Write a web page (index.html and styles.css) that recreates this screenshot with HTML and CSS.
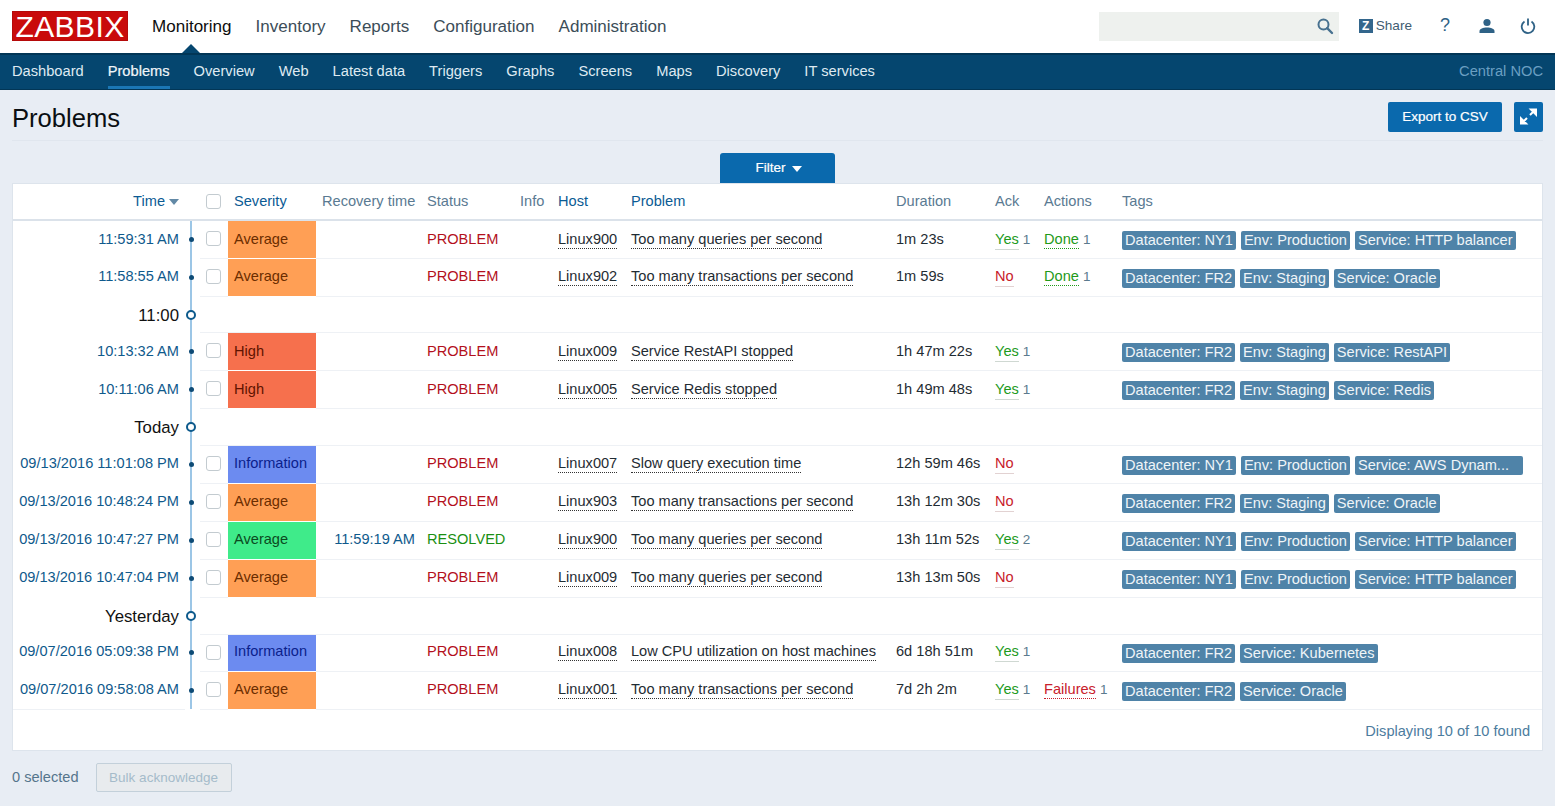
FILE: index.html
```html
<!DOCTYPE html>
<html lang="en">
<head>
<meta charset="utf-8">
<title>Problems</title>
<link rel="stylesheet" href="styles.css">
</head>
<body>
<header class="topbar">
  <div class="logo">ZABBIX</div>
  <nav class="mainnav">
    <a class="active">Monitoring</a><a>Inventory</a><a>Reports</a><a>Configuration</a><a>Administration</a>
  </nav>
  <div class="tools">
    <div class="search"><svg class="ico" width="18" height="18" viewBox="0 0 18 18"><circle cx="7.5" cy="7.5" r="5" fill="none" stroke="#47718f" stroke-width="2"/><path d="M11.2 11.2L16 16" stroke="#47718f" stroke-width="2.4" stroke-linecap="round"/></svg></div>
    <a class="share"><span class="zbox">Z</span>Share</a>
    <a class="help">?</a>
    <svg class="user" width="16" height="16" viewBox="0 0 16 16"><circle cx="8" cy="4.5" r="3.6" fill="#2f6286"/><path d="M0.5 15v-2c0-2.4 3.6-3.6 7.5-3.6s7.5 1.200 7.500 3.600v2z" fill="#2f6286"/></svg>
    <svg class="power" width="16" height="16" viewBox="0 0 16 16"><path d="M4.500 3.500A6.300 6.300 0 1 0 11.500 3.500" fill="none" stroke="#2f6286" stroke-width="1.800"/><path d="M8 0.500V7.500" stroke="#2f6286" stroke-width="1.800"/></svg>
  </div>
</header>
<nav class="subnav">
  <a>Dashboard</a><a class="active">Problems</a><a>Overview</a><a>Web</a><a>Latest data</a><a>Triggers</a><a>Graphs</a><a>Screens</a><a>Maps</a><a>Discovery</a><a>IT services</a>
  <span class="noc">Central NOC</span>
</nav>
<main class="page">
  <div class="titlebar">
    <h1>Problems</h1>
    <div class="actions">
      <button class="btn export">Export to CSV</button>
      <button class="btn expand"><svg width="19" height="19" viewBox="0 0 19 19"><path d="M11 8L16 3M12 2.500h5v5z" stroke="#fff" stroke-width="2" fill="#fff"/><path d="M8 11L3 16M7 16.500H2v-5z" stroke="#fff" stroke-width="2" fill="#fff"/></svg></button>
    </div>
  </div>
  <div class="filterwrap"><button class="filter">Filter<i class="caret-w"></i></button></div>
  <section class="card">
    <table class="grid">
      <colgroup><col class="c-time"><col class="c-line"><col class="c-chk"><col class="c-sev"><col class="c-rec"><col class="c-status"><col class="c-info"><col class="c-host"><col class="c-prob"><col class="c-dur"><col class="c-ack"><col class="c-act"><col class="c-tags"></colgroup>
      <thead>
        <tr>
          <th class="time"><a class="lnk">Time</a><i class="caret-b"></i></th><th></th><th class="chk"><input type="checkbox"></th><th><a class="lnk">Severity</a></th><th class="rec">Recovery time</th><th>Status</th><th>Info</th><th><a class="lnk">Host</a></th><th><a class="lnk">Problem</a></th><th>Duration</th><th>Ack</th><th>Actions</th><th>Tags</th>
        </tr>
      </thead>
      <tbody>
        <tr class="lo"><td class="time"><a>11:59:31 AM</a></td><td class="line"><i class="dot"></i></td><td class="chk"><input type="checkbox"></td><td class="sev avg">Average</td><td></td><td class="prob">PROBLEM</td><td></td><td><span class="u">Linux900</span></td><td><span class="u">Too many queries per second</span></td><td>1m 23s</td><td><span class="yes">Yes</span><span class="n">1</span></td><td><span class="done">Done</span><span class="n">1</span></td><td><div class="tags"><b>Datacenter: NY1</b><b>Env: Production</b><b>Service: HTTP balancer</b></div></td></tr>
        <tr><td class="time"><a>11:58:55 AM</a></td><td class="line"><i class="dot"></i></td><td class="chk"><input type="checkbox"></td><td class="sev avg">Average</td><td></td><td class="prob">PROBLEM</td><td></td><td><span class="u">Linux902</span></td><td><span class="u">Too many transactions per second</span></td><td>1m 59s</td><td><span class="no">No</span></td><td><span class="done">Done</span><span class="n">1</span></td><td><div class="tags"><b>Datacenter: FR2</b><b>Env: Staging</b><b>Service: Oracle</b></div></td></tr>
        <tr class="mark h36"><td class="time">11:00</td><td class="line"><i class="ring"></i></td><td colspan="11"></td></tr>
        <tr class="lo"><td class="time"><a>10:13:32 AM</a></td><td class="line"><i class="dot"></i></td><td class="chk"><input type="checkbox"></td><td class="sev high">High</td><td></td><td class="prob">PROBLEM</td><td></td><td><span class="u">Linux009</span></td><td><span class="u">Service RestAPI stopped</span></td><td>1h 47m 22s</td><td><span class="yes">Yes</span><span class="n">1</span></td><td></td><td><div class="tags"><b>Datacenter: FR2</b><b>Env: Staging</b><b>Service: RestAPI</b></div></td></tr>
        <tr class="lo"><td class="time"><a>10:11:06 AM</a></td><td class="line"><i class="dot"></i></td><td class="chk"><input type="checkbox"></td><td class="sev high">High</td><td></td><td class="prob">PROBLEM</td><td></td><td><span class="u">Linux005</span></td><td><span class="u">Service Redis stopped</span></td><td>1h 49m 48s</td><td><span class="yes">Yes</span><span class="n">1</span></td><td></td><td><div class="tags"><b>Datacenter: FR2</b><b>Env: Staging</b><b>Service: Redis</b></div></td></tr>
        <tr class="mark h37"><td class="time">Today</td><td class="line"><i class="ring"></i></td><td colspan="11"></td></tr>
        <tr><td class="time"><a>09/13/2016 11:01:08 PM</a></td><td class="line"><i class="dot"></i></td><td class="chk"><input type="checkbox"></td><td class="sev info">Information</td><td></td><td class="prob">PROBLEM</td><td></td><td><span class="u">Linux007</span></td><td><span class="u">Slow query execution time</span></td><td>12h 59m 46s</td><td><span class="no">No</span></td><td></td><td><div class="tags"><b>Datacenter: NY1</b><b>Env: Production</b><b class="trunc">Service: AWS Dynam...</b></div></td></tr>
        <tr><td class="time"><a>09/13/2016 10:48:24 PM</a></td><td class="line"><i class="dot"></i></td><td class="chk"><input type="checkbox"></td><td class="sev avg">Average</td><td></td><td class="prob">PROBLEM</td><td></td><td><span class="u">Linux903</span></td><td><span class="u">Too many transactions per second</span></td><td>13h 12m 30s</td><td><span class="no">No</span></td><td></td><td><div class="tags"><b>Datacenter: FR2</b><b>Env: Staging</b><b>Service: Oracle</b></div></td></tr>
        <tr><td class="time"><a>09/13/2016 10:47:27 PM</a></td><td class="line"><i class="dot"></i></td><td class="chk"><input type="checkbox"></td><td class="sev ok">Average</td><td class="rec"><a>11:59:19 AM</a></td><td class="res">RESOLVED</td><td></td><td><span class="u">Linux900</span></td><td><span class="u">Too many queries per second</span></td><td>13h 11m 52s</td><td><span class="yes">Yes</span><span class="n">2</span></td><td></td><td><div class="tags"><b>Datacenter: NY1</b><b>Env: Production</b><b>Service: HTTP balancer</b></div></td></tr>
        <tr><td class="time"><a>09/13/2016 10:47:04 PM</a></td><td class="line"><i class="dot"></i></td><td class="chk"><input type="checkbox"></td><td class="sev avg">Average</td><td></td><td class="prob">PROBLEM</td><td></td><td><span class="u">Linux009</span></td><td><span class="u">Too many queries per second</span></td><td>13h 13m 50s</td><td><span class="no">No</span></td><td></td><td><div class="tags"><b>Datacenter: NY1</b><b>Env: Production</b><b>Service: HTTP balancer</b></div></td></tr>
        <tr class="mark h37"><td class="time">Yesterday</td><td class="line"><i class="ring"></i></td><td colspan="11"></td></tr>
        <tr class="h37 hi"><td class="time"><a>09/07/2016 05:09:38 PM</a></td><td class="line"><i class="dot"></i></td><td class="chk"><input type="checkbox"></td><td class="sev info">Information</td><td></td><td class="prob">PROBLEM</td><td></td><td><span class="u">Linux008</span></td><td><span class="u">Low CPU utilization on host machines</span></td><td>6d 18h 51m</td><td><span class="yes">Yes</span><span class="n">1</span></td><td></td><td><div class="tags"><b>Datacenter: FR2</b><b>Service: Kubernetes</b></div></td></tr>
        <tr class="last"><td class="time"><a>09/07/2016 09:58:08 AM</a></td><td class="line"><i class="dot"></i></td><td class="chk"><input type="checkbox"></td><td class="sev avg">Average</td><td></td><td class="prob">PROBLEM</td><td></td><td><span class="u">Linux001</span></td><td><span class="u">Too many transactions per second</span></td><td>7d 2h 2m</td><td><span class="yes">Yes</span><span class="n">1</span></td><td><span class="fail">Failures</span><span class="n">1</span></td><td><div class="tags"><b>Datacenter: FR2</b><b>Service: Oracle</b></div></td></tr>
      </tbody>
    </table>
    <div class="paging">Displaying 10 of 10 found</div>
  </section>
  <div class="bulk"><span>0 selected</span><button class="bulkbtn">Bulk acknowledge</button></div>
</main>
</body>
</html>
```
FILE: styles.css
```css
* { box-sizing: border-box; }
html, body { margin: 0; height: 100%; overflow: hidden; }
body { background: #e8edf4; color: #1f2c33; font: 14.6px/1.2 "Liberation Sans", Arial, sans-serif; }
a { color: inherit; text-decoration: none; }
button { font-family: inherit; }

.topbar { height: 53px; background: #fff; display: flex; align-items: flex-start; padding: 11px 0 0 12px; }
.logo { width: 116px; height: 30px; background: #c90b0b; color: #fff; font-size: 30px; line-height: 30px; text-align: center; letter-spacing: 0.4px; border: 1px solid #b50a0a; }
.mainnav { display: flex; gap: 24px; margin-left: 24px; font-size: 17.05px; color: #3c4d58; padding-top: 6px; }
.mainnav a { position: relative; height: 36px; }
.mainnav .active { color: #0d0d0d; }
.mainnav .active::after { content: ""; position: absolute; left: 30px; bottom: 0; border-style: solid; border-color: transparent; border-width: 0 9px 9px; border-bottom-color: #05466f; }
.tools { margin-left: auto; display: flex; align-items: center; height: 30px; color: #3f6a89; }
.search { width: 240px; height: 29px; background: #eef1ee; display: flex; justify-content: flex-end; align-items: center; padding-right: 5px; }
.share { display: flex; align-items: center; margin-left: 20px; color: #3f5d72; font-size: 13.6px; }
.zbox { width: 14px; height: 14px; background: #33668c; color: #fff; font: bold 12px/14px "Liberation Sans", sans-serif; text-align: center; margin-right: 3px; }
.help { margin-left: 28px; width: 10px; font-size: 18px; color: #2f6286; }
.user { margin-left: 29px; }
.power { margin-left: 25px; margin-right: 19px; }

.subnav { height: 37px; background: #05466f; border-top: 2px solid #023656; border-bottom: 1px solid #023656; display: flex; align-items: center; gap: 24px; padding: 0 12px; color: #dfeaf2; font-size: 14.66px; }
.subnav a { position: relative; height: 34px; line-height: 33px; }
.subnav .active { color: #f0f5f9; border-bottom: 3px solid #1b77b5; -webkit-text-stroke: 0.2px #f0f5f9; }
.noc { margin-left: auto; color: #6a9fc2; }

.page { padding: 0 12px; }
.titlebar { height: 51px; border-bottom: 1px solid #e0e6ee; display: flex; align-items: center; justify-content: space-between; padding-top: 3px; }
h1 { margin: 3px 0 0; font-weight: 400; font-size: 25.6px; color: #0a0f12; }
.actions { display: flex; gap: 12px; padding-top: 1px; }
.btn { height: 30px; background: #0a69ad; border: 0; border-radius: 2px; color: #fff; font-size: 13.5px; padding: 0 0 1px; -webkit-text-stroke: 0.2px #fff; display: flex; align-items: center; justify-content: center; }
.export { width: 114px; }
.expand { width: 29px; }
.filterwrap { display: flex; justify-content: center; height: 42px; padding-top: 12px; }
.filter { width: 115px; height: 30px; background: #0a69ad; border: 0; border-radius: 3px 3px 0 0; color: #fff; font-size: 13.5px; -webkit-text-stroke: 0.2px #fff; display: flex; align-items: center; justify-content: center; gap: 6px; padding: 0 0 2px 2px; }
.caret-w { width: 0; height: 0; border: 5px solid transparent; border-top: 6px solid #fff; border-bottom: 0; margin-top: 3px; }

.card { background: #fff; border: 1px solid #dde4ec; height: 568px; }
.grid { width: 1529px; table-layout: fixed; border-collapse: separate; border-spacing: 0; }
.c-time { width: 172px; } .c-line { width: 15px; } .c-chk { width: 28px; } .c-sev { width: 88px; } .c-rec { width: 105px; }
.c-status { width: 93px; } .c-info { width: 38px; } .c-host { width: 73px; } .c-prob { width: 265px; } .c-dur { width: 99px; }
.c-ack { width: 49px; } .c-act { width: 78px; } .c-tags { width: 426px; }
th { height: 37px; padding: 0 6px; text-align: left; font-weight: 400; color: #5a7a92; border-bottom: 2px solid #dbe2ea; white-space: nowrap; }
td { height: 38px; padding: 0 6px 1px; border-bottom: 1px solid #eef1f5; white-space: nowrap; overflow: visible; }
.h36 td { height: 36px; }
.h37 td { height: 37px; }
tr.lo td:not(:last-child) { padding-bottom: 0; }
tr.hi td:not(:last-child) { padding-bottom: 2px; }
.lnk { color: #0b5b94; }
th.time, td.time { text-align: right; color: #0f5a8c; border-bottom-color: transparent; }
th.time { border-bottom-color: #dbe2ea; }
.caret-b { display: inline-block; width: 0; height: 0; border: 5px solid transparent; border-top: 6px solid #6289a6; border-bottom: 0; margin-left: 4px; vertical-align: 1px; }
th.rec { text-align: right; }
td.rec { text-align: right; color: #0f5a8c; }
.mark td.time { color: #111; font-size: 16.8px; padding-top: 3px; padding-bottom: 0; }
.last td.time { border-bottom-color: #eef1f5; }
td.line { padding: 0; position: relative; border-bottom-color: transparent; }
.last td.line { border-bottom-color: transparent; }
td.line::before { content: ""; position: absolute; left: 5px; top: 0; bottom: -1px; width: 2px; background: #9cc6e6; }
.last td.line::before { bottom: 0; }
.dot { position: absolute; left: 4px; top: 50%; width: 5px; height: 5px; margin-top: -3px; border-radius: 50%; background: #0d4a75; }
.ring { position: absolute; left: 1px; top: 50%; width: 10px; height: 10px; margin-top: -5px; border-radius: 50%; background: #fff; border: 2px solid #0d5a8c; }
th.chk { padding: 0 0 0 6px; }
tr td.chk, tr.lo td.chk, tr.hi td.chk { padding: 0 0 2px 6px; }
input[type=checkbox] { appearance: none; -webkit-appearance: none; display: block; width: 15px; height: 15px; margin: 0; background: #fff; border: 1px solid #c3cbd0; border-radius: 3px; }
.sev { border-bottom-color: #fff; }
.avg { background: #ff9f55; color: #6b2d00; }
.high { background: #f6704d; color: #601300; }
.info { background: #6c8bf0; color: #0b1f8c; }
.ok { background: #3feb8a; color: #0b4a1f; }
.prob { color: #b3101c; }
.res { color: #1a8f12; }
.u { border-bottom: 1px dotted #333; padding-bottom: 1px; }
.yes { color: #1d9a1d; border-bottom: 1px solid #cfd8d2; padding-bottom: 2px; }
.no { color: #c8202b; border-bottom: 1px solid #e2d2d2; padding-bottom: 2px; }
.done { color: #1f9a1a; border-bottom: 1px dotted #1f9a1a; padding-bottom: 1px; }
.fail { color: #c8202b; border-bottom: 1px dotted #c8202b; padding-bottom: 1px; }
.n { margin-left: 4px; color: #5b7a8e; font-size: 13.5px; }
.tags { display: flex; gap: 5px; margin-top: 2px; font-size: 14.6px; }
.tags b { font-weight: 400; height: 19px; line-height: 19px; padding: 0 3px; background: #4f83a8; color: #f0f5f8; border-radius: 2px; }
.tags .trunc { width: 168px; }
.paging { text-align: right; padding: 13px 12px 0 0; color: #4c7c9e; }
.bulk { display: flex; align-items: center; gap: 17px; padding-top: 12px; color: #55758c; }
.bulkbtn { width: 136px; height: 29px; background: #e8ebee; border: 1px solid #c3d0da; border-radius: 2px; color: #a5bbca; font-size: 13.5px; padding: 0 0 1px; }
```
